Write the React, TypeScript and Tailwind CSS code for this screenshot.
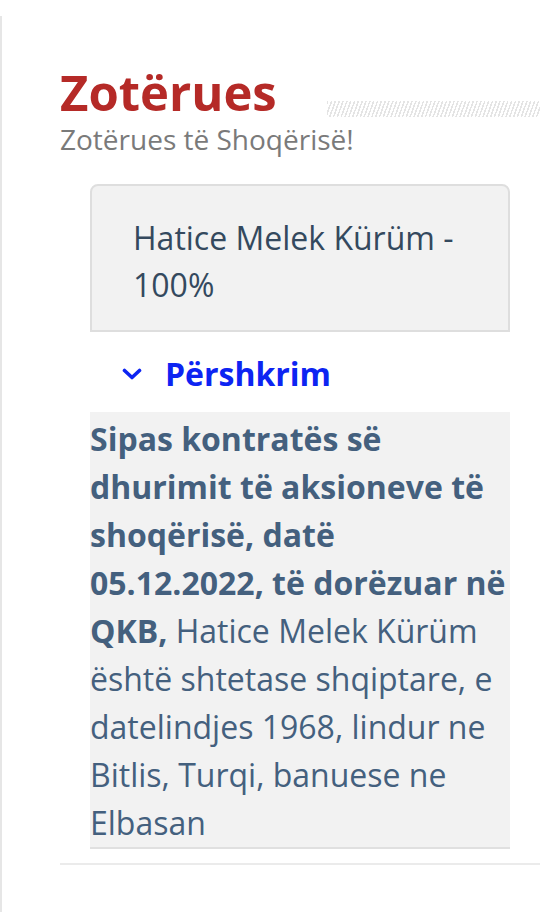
import React from "react";

export default function App() {
  return (
    <div className="min-h-[912px] w-[548px] bg-white" style={{ fontFamily: '"Open Sans", sans-serif' }}>
      <div className="mt-[16px] min-h-[896px] border-l-2 border-[#e6e6e6] pt-[48px] pl-[58px] pr-[8px]">
        <div className="flex items-end">
          <h1 className="text-[49px] font-bold leading-[56px] text-[#b52a27]">Zotërues</h1>
          <div
            className="ml-[50px] mb-[3px] h-[16px] flex-1"
            style={{
              backgroundImage:
                "repeating-linear-gradient(110deg, #e4e4e4 0px, #e4e4e4 1.5px, transparent 1.5px, transparent 3.6px)",
            }}
          />
        </div>
        <p className="mt-[3px] text-[28px] leading-[32px] text-[#7a7a7a]">Zotërues të Shoqërisë!</p>

        <div className="ml-[30px] mr-[30px] mt-[29px]">
          <div className="rounded-t-[8px] border-2 border-[#dedede] bg-[#f2f2f2] pl-[41px] pr-[20px] pt-[28px] pb-[22px] text-[32px] leading-[47px] text-[#34495e]">
            Hatice Melek Kürüm - 100%
          </div>
          <div className="flex items-center pl-[32px] pt-[18px] pb-[14px]">
            <svg width="20" height="12" viewBox="0 0 20 12" className="mr-[23px]">
              <path d="M2.5 2.5 L10 9.5 L17.5 2.5" fill="none" stroke="#0d24f2" strokeWidth="3.6" strokeLinecap="round" strokeLinejoin="round" />
            </svg>
            <span className="text-[32px] font-bold leading-[48px] text-[#0d24f2]">Përshkrim</span>
          </div>
          <div className="border-b-2 border-[#e0e0e0] bg-[#f2f2f2] pt-[3px] text-[32px] leading-[48px] text-[#44607e]">
            <b className="font-bold">Sipas kontratës së dhurimit të aksioneve të shoqërisë, datë 05.12.2022, të dorëzuar në QKB,</b>{" "}
            Hatice Melek Kürüm është shtetase shqiptare, e datelindjes 1968, lindur ne Bitlis, Turqi, banuese ne Elbasan
          </div>
        </div>
        <div className="mt-[14px] h-[2px] bg-[#ebebeb]" />
      </div>
    </div>
  );
}
